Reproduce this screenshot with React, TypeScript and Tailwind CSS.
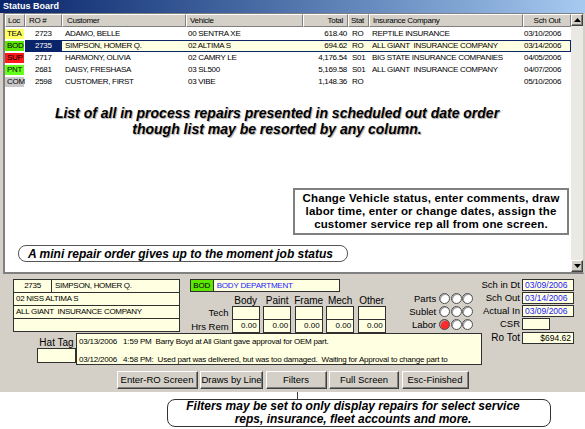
import React from "react";

type Row = {
  loc: string;
  locBg: string;
  ro: string;
  cust: string;
  veh: string;
  total: string;
  stat: string;
  ins: string;
  out: string;
  sel?: boolean;
};

const rows: Row[] = [
  { loc: "TEA", locBg: "bg-[#ffff66]", ro: "2723", cust: "ADAMO, BELLE", veh: "00 SENTRA XE", total: "618.40", stat: "RO", ins: "REPTILE INSURANCE", out: "03/10/2006" },
  { loc: "BOD", locBg: "bg-[#5ce600]", ro: "2735", cust: "SIMPSON, HOMER Q.", veh: "02 ALTIMA S", total: "694.62", stat: "RO", ins: "ALL GIANT  INSURANCE COMPANY", out: "03/14/2006", sel: true },
  { loc: "SUP", locBg: "bg-[#ff1a1a]", ro: "2717", cust: "HARMONY, OLIVIA", veh: "02 CAMRY LE", total: "4,176.54", stat: "S01", ins: "BIG STATE INSURANCE COMPANIES", out: "04/05/2006" },
  { loc: "PNT", locBg: "bg-[#66ff1a]", ro: "2681", cust: "DAISY, FRESHASA", veh: "03 SL500", total: "5,169.58", stat: "S01", ins: "ALL GIANT  INSURANCE COMPANY", out: "04/07/2006" },
  { loc: "COM", locBg: "bg-[#c8c8c8]", ro: "2598", cust: "CUSTOMER, FIRST", veh: "03 VIBE", total: "1,148.36", stat: "RO", ins: "", out: "05/10/2006" },
];

const hdr =
  "h-[13px] flex items-center bg-[#d4d0c8] border-t border-l border-t-white border-l-white border-r border-b border-r-[#808080] border-b-[#808080] whitespace-nowrap overflow-hidden";

function ArrowBtn({ up }: { up?: boolean }) {
  return (
    <div className="h-[12px] w-[12px] flex items-center justify-center bg-[#d4d0c8] border border-t-white border-l-white border-r-[#404040] border-b-[#404040] shadow-[inset_-1px_-1px_0_#808080]">
      <svg width="7" height="4" viewBox="0 0 7 4">
        {up ? <polygon points="3.5,0 7,4 0,4" fill="#000" /> : <polygon points="0,0 7,0 3.5,4" fill="#000" />}
      </svg>
    </div>
  );
}

function Btn({ w, children }: { w: string; children: React.ReactNode }) {
  return (
    <div
      className={`${w} h-[18px] flex items-center justify-center bg-[#d4d0c8] border border-t-white border-l-white border-r-[#404040] border-b-[#404040] shadow-[inset_-1px_-1px_0_#808080] text-[9.5px] whitespace-nowrap`}
    >
      {children}
    </div>
  );
}

const field = "border border-[#303030] bg-[#ffffe1]";

function Circle({ red }: { red?: boolean }) {
  return (
    <div
      className={`w-[11px] h-[11px] rounded-full border border-[#505050] ${red ? "bg-[#ff2a2a]" : "bg-white"} shadow-[inset_1px_1px_0_#a0a0a0]`}
    />
  );
}

export default function App() {
  return (
    <div className="w-[585px] h-[429px] overflow-hidden bg-white text-black font-['Liberation_Sans',Arial,sans-serif] leading-none flex flex-col">
      <div className="h-[392px] bg-[#d4d0c8] flex flex-col">
        {/* Title bar */}
        <div className="h-[13px] bg-gradient-to-r from-[#0a246a] to-[#a6caf0] text-white font-bold text-[9px] pl-[3px] flex items-center">
          Status Board
        </div>

        {/* List */}
        <div className="ml-[3px] w-[581px] h-[261px] flex bg-white border-t border-l-2 border-r border-b-2 border-t-[#808080] border-l-[#808080] border-r-[#d4d0c8] border-b-[#808080]">
          <div className="w-[566px] flex flex-col text-[8px] tracking-[-0.3px]">
            {/* header */}
            <div className="flex">
              <div className={`${hdr} w-[20px] pl-[2px]`}>Loc</div>
              <div className={`${hdr} w-[37px] pl-[3px]`}>RO #</div>
              <div className={`${hdr} w-[124px] pl-[4px]`}>Customer</div>
              <div className={`${hdr} w-[117px] pl-[3px]`}>Vehicle</div>
              <div className={`${hdr} w-[45px] justify-end pr-[4px]`}>Total</div>
              <div className={`${hdr} w-[21px] pl-[2px]`}>Stat</div>
              <div className={`${hdr} w-[154px] pl-[3px]`}>Insurance Company</div>
              <div className={`${hdr} w-[48px] justify-center`}>Sch Out</div>
            </div>
            {/* rows */}
            <div className="flex flex-col pt-[1px]">
              {rows.map((r) => (
                <div key={r.ro} className="flex h-[12px]">
                  <div className="w-[20px] flex items-center py-[1px]">
                    <div className={`${r.locBg} w-[19px] h-full flex items-center pl-[2px]`}>{r.loc}</div>
                  </div>
                  <div
                    className={`flex flex-1 ${r.sel ? "bg-[#ffffe1] border border-[#0a246a]" : "border border-transparent"}`}
                  >
                    <div
                      className={`w-[36px] flex items-center pl-[9px] ${r.sel ? "bg-[#0a246a] text-white" : ""}`}
                    >
                      {r.ro}
                    </div>
                    <div className="w-[124px] flex items-center pl-[3px] whitespace-pre">{r.cust}</div>
                    <div className="w-[117px] flex items-center pl-[2px] whitespace-pre">{r.veh}</div>
                    <div className="w-[45px] flex items-center justify-end pr-[1px]">{r.total}</div>
                    <div className="w-[21px] flex items-center pl-[4px]">{r.stat}</div>
                    <div className="w-[154px] flex items-center pl-[3px] whitespace-pre">{r.ins}</div>
                    <div className="flex-1 flex items-center pl-[1px]">{r.out}</div>
                  </div>
                </div>
              ))}
            </div>

            {/* annotations */}
            <div className="mt-[17px] pr-[22px] text-center font-bold italic text-[14px] leading-[16px] tracking-normal [text-shadow:1px_1px_1px_#a8a8a8]">
              <div>List of all in process repairs presented in scheduled out date order</div>
              <div>though list may be resorted by any column.</div>
            </div>
            <div className="mt-[51px] ml-[288px] w-[276px] h-[47px] border-2 border-[#808080] bg-white flex flex-col items-center justify-center text-center font-bold text-[11.5px] leading-[13px] tracking-[0.15px]">
              <div>Change Vehicle status, enter comments, draw</div>
              <div>labor time, enter or change dates, assign the</div>
              <div>customer service rep all from one screen.</div>
            </div>
            <div className="mt-[10px] ml-[13px] w-[330px] h-[17px] rounded-[8px] border border-[#555] flex items-center pl-[9px] font-bold italic text-[12px] tracking-normal">
              A mini repair order gives up to the moment job status
            </div>
          </div>
          {/* scrollbar */}
          <div className="w-[12px] flex flex-col bg-[#ebe9e4]">
            <ArrowBtn up />
            <div className="flex-1" />
            <ArrowBtn />
          </div>
        </div>

        {/* Lower panel */}
        <div className="flex-1 flex flex-col">
          <div className="flex pt-[5px]">
            <div className="w-[483px] flex flex-col">
              <div className="flex h-[54px]">
                {/* Mini RO */}
                <div className={`ml-[13px] w-[167px] h-[53px] ${field} flex flex-col text-[8px] tracking-[-0.3px]`}>
                  <div className="flex h-[13px] border-b border-[#303030]">
                    <div className="w-[38px] border-r border-[#303030] flex items-center justify-center">2735</div>
                    <div className="flex items-center pl-[3px]">SIMPSON, HOMER Q.</div>
                  </div>
                  <div className="h-[13px] border-b border-[#303030] flex items-center pl-[2px]">02 NISS ALTIMA S</div>
                  <div className="h-[13px] border-b border-[#303030] flex items-center pl-[2px] whitespace-pre">
                    ALL GIANT  INSURANCE COMPANY
                  </div>
                  <div className="flex-1" />
                </div>

                {/* Department + labor grid */}
                <div className="ml-[10px] w-[197px] flex flex-col">
                  <div className="flex h-[13px] text-[8px] tracking-[-0.2px]">
                    <div className="w-[24px] bg-[#5ce600] border border-[#303030] flex items-center justify-center">BOD</div>
                    <div className="w-[126px] bg-[#ffffe1] border border-l-0 border-[#303030] text-[#1a1aff] flex items-center pl-[3px]">
                      BODY DEPARTMENT
                    </div>
                  </div>
                  <div className="mt-[2px] h-[12px] flex pl-[42px] gap-[3.5px] text-[10px]">
                    {["Body", "Paint", "Frame", "Mech", "Other"].map((h) => (
                      <div key={h} className="w-[28px] flex items-end justify-center">
                        {h}
                      </div>
                    ))}
                  </div>
                  <div className="flex h-[14px]">
                    <div className="w-[42px] pr-[3px] flex items-center justify-end text-[9.5px]">Tech</div>
                    <div className="flex gap-[3.5px]">
                      {[0, 1, 2, 3, 4].map((i) => (
                        <div key={i} className={`w-[28px] h-[14px] ${field}`} />
                      ))}
                    </div>
                  </div>
                  <div className="flex h-[13px]">
                    <div className="w-[42px] pr-[3px] flex items-center justify-end text-[9.5px]">Hrs Rem</div>
                    <div className="flex gap-[3.5px]">
                      {[0, 1, 2, 3, 4].map((i) => (
                        <div
                          key={i}
                          className={`w-[28px] h-[13px] ${field} border-t-0 flex items-center justify-end pr-[2px] text-[8px]`}
                        >
                          0.00
                        </div>
                      ))}
                    </div>
                  </div>
                </div>

                {/* Parts / Sublet / Labor */}
                <div className="w-[97px] flex flex-col pt-[13px] text-[9.5px]">
                  {[
                    ["Parts", false],
                    ["Sublet", false],
                    ["Labor", true],
                  ].map(([l, red]) => (
                    <div key={l as string} className="h-[13px] flex items-center">
                      <div className="w-[50px] text-right">{l as string}</div>
                      <div className="ml-[3px] flex gap-[0.5px]">
                        <Circle red={red as boolean} />
                        <Circle />
                        <Circle />
                      </div>
                    </div>
                  ))}
                </div>
              </div>

              {/* Hat tag + notes */}
              <div className="flex h-[32px]">
                <div className="ml-[37px] w-[39px] flex flex-col items-center">
                  <div className="h-[15px] flex items-end text-[10px] whitespace-nowrap">Hat Tag</div>
                  <div className={`w-[39px] h-[15px] ${field}`} />
                </div>
                <div className={`w-[406px] h-[32px] ${field} overflow-hidden pl-[2px] pt-[3px] text-[8px] tracking-[-0.2px] leading-[9px] whitespace-pre`}>
                  <div>{"03/13/2006   1:59 PM  Barry Boyd at All Giant gave approval for OEM part."}</div>
                  <div className="mt-[9px]">
                    {"03/12/2006   4:58 PM:  Used part was delivered, but was too damaged.  Waiting for Approval to change part to"}
                  </div>
                </div>
              </div>
            </div>

            {/* Right fields */}
            <div className="flex flex-col text-[9.5px]">
              {[
                ["Sch in Dt", "03/09/2006", "w-[52px]"],
                ["Sch Out", "03/14/2006", "w-[52px]"],
                ["Actual In", "03/09/2006", "w-[52px]"],
                ["CSR", "", "w-[28px]"],
              ].map(([l, v, w]) => (
                <div key={l} className="h-[13px] flex items-start">
                  <div className="w-[37px] text-right h-[12px] flex items-center justify-end whitespace-nowrap">{l}</div>
                  <div className={`ml-[2px] ${w} h-[12px] ${field} flex items-center pl-[2px] text-[8.5px] text-[#1a1aff]`}>{v}</div>
                </div>
              ))}
              <div className="mt-[1px] h-[13px] flex items-start">
                <div className="w-[37px] text-right h-[12px] flex items-center justify-end text-[10px]">Ro Tot</div>
                <div className={`ml-[2px] w-[52px] h-[12px] ${field} flex items-center justify-end pr-[2px] text-[8.5px]`}>$694.62</div>
              </div>
            </div>
          </div>

          {/* Buttons */}
          <div className="mt-[6px] flex justify-center gap-[2.5px]">
            <Btn w="w-[81px]">Enter-RO Screen</Btn>
            <Btn w="w-[63px]">Draws by Line</Btn>
            <Btn w="w-[61px]">Filters</Btn>
            <Btn w="w-[70px]">Full Screen</Btn>
            <Btn w="w-[67px]">Esc-Finished</Btn>
          </div>
        </div>
      </div>

      {/* Bottom annotation */}
      <div className="flex flex-col">
        <div className="ml-[297px] w-px h-[7px] bg-[#404040]" />
        <div className="ml-[167px] w-[384px] h-[28px] rounded-[8px] border border-[#333] flex flex-col items-center justify-center pr-[12px] font-bold italic text-[12px] leading-[13px]">
          <div>Filters may be set to only display repairs for select service</div>
          <div>reps, insurance, fleet accounts and more.</div>
        </div>
      </div>
    </div>
  );
}
